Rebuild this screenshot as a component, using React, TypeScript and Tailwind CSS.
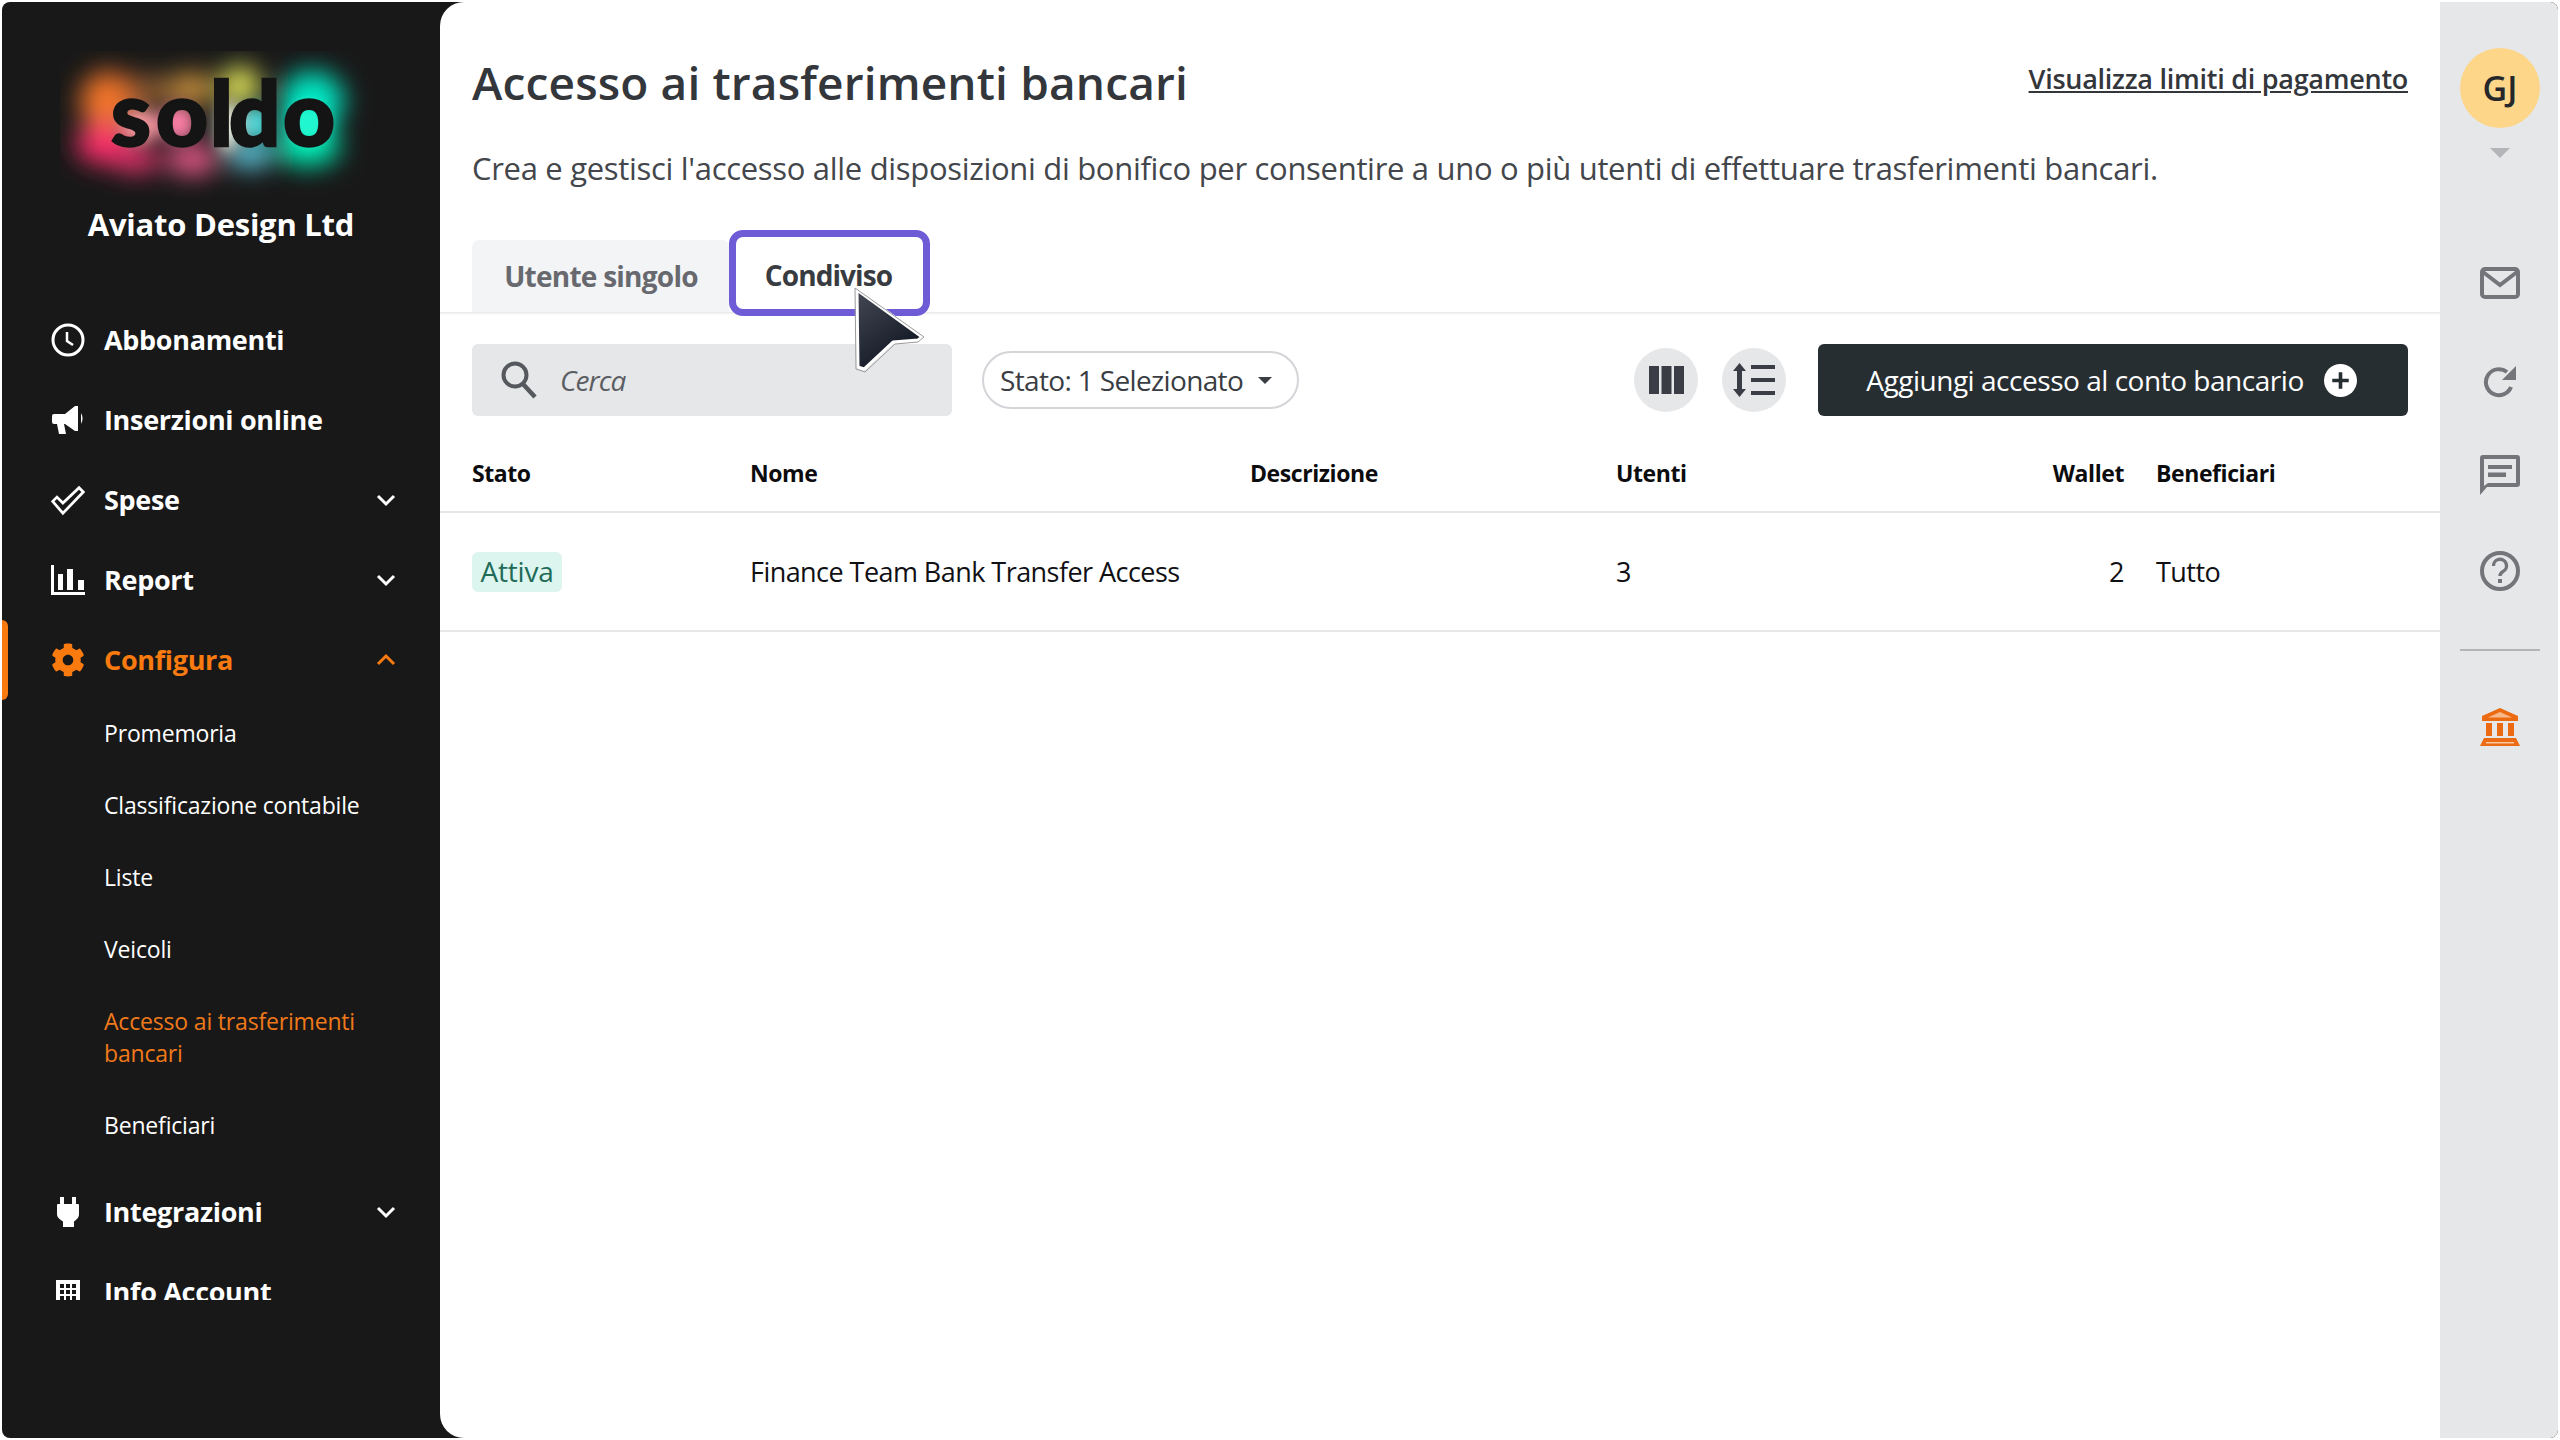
import React from "react";
import { FaCog } from "react-icons/fa";

const Chevron = ({ up = false }: { up?: boolean }) => (
  <svg width="20" height="14" viewBox="0 0 20 14" fill="none" stroke="currentColor" strokeWidth="3" className="shrink-0">
    {up ? <path d="M2 11l8-8 8 8" /> : <path d="M2 3l8 8 8-8" />}
  </svg>
);

const Clock = () => (
  <svg width="34" height="34" viewBox="0 0 34 34" fill="none" stroke="currentColor" strokeWidth="3">
    <circle cx="17" cy="17" r="15" />
    <path d="M16 9v9l6 4" strokeWidth="2.5" />
  </svg>
);
const Horn = () => (
  <svg width="32" height="28" viewBox="0 0 32 28" fill="currentColor">
    <path d="M2 8h11L23 0h3v25h-3L13 18h-1l2 10H7L5 18H2a2 2 0 0 1-2-2v-6a2 2 0 0 1 2-2z" />
    <path d="M29 7q3 5.500 0 11z" />
  </svg>
);
const Check = () => (
  <svg width="42" height="35" viewBox="0 0 40 34" fill="none" stroke="currentColor" strokeWidth="3.2" strokeLinejoin="miter">
    <path d="M2 18l5-5 7 7L33 2l5 5-24 25z" />
  </svg>
);
const Bars = () => (
  <svg width="34" height="30" viewBox="0 0 34 30" fill="currentColor">
    <path d="M0 0h3v27h31v3H0zM7 9h5v16H7zM16 4h6v21h-6zM27 15h6v10h-6z" />
  </svg>
);
const Plug = () => (
  <svg width="22" height="30" viewBox="0 0 22 30" fill="currentColor">
    <path d="M3 0h4v7h8V0h4v7h2a1 1 0 0 1 1 1v9c0 4-3 6-5 7.500V30H6v-5.500C4 23 0 21 0 17V8a1 1 0 0 1 1-1h2z" />
  </svg>
);
const Building = () => (
  <svg width="24" height="24" viewBox="0 0 24 24" fill="currentColor" fillRule="evenodd">
    <path d="M0 0h24v24H0zM4 4v4h4V4zm6 0v4h4V4zm6 0v4h4V4zM4 10v4h4v-4zm6 0v4h4v-4zm6 0v4h4v-4zM4 16v4h4v-4zm6 0v4h4v-4zm6 0v4h4v-4z" />
  </svg>
);

const NavItem = ({ icon, label, chevron, active, up }: { icon: React.ReactNode; label: string; chevron?: boolean; active?: boolean; up?: boolean }) => (
  <div className={`relative flex h-[80px] items-center pl-[49px] pr-[44px] ${active ? "text-[#f97b10]" : "text-white"}`}>
    {active && <div className="absolute left-0 top-0 h-[80px] w-[6px] rounded-r-md bg-[#f97b10]" />}
    <div className="flex w-[34px] shrink-0 justify-center">{icon}</div>
    <span className="ml-[19px] flex-1 text-[27px] font-bold tracking-[-0.32px]">{label}</span>
    {chevron && <Chevron up={up} />}
  </div>
);

const SubItem = ({ children, active }: { children: React.ReactNode; active?: boolean }) => (
  <div className={`py-[20px] pl-[102px] pr-[60px] text-[23px] leading-[32px] tracking-[-0.18px] ${active ? "text-[#f0791a]" : "text-white"}`}>{children}</div>
);

const Logo = () => (
  <svg width="320" height="150" viewBox="60 50 320 150" className="block">
    <defs>
      <filter id="b1" x="-50%" y="-50%" width="200%" height="200%"><feGaussianBlur stdDeviation="13" /></filter>
      <filter id="b2" x="-50%" y="-50%" width="200%" height="200%"><feGaussianBlur stdDeviation="8" /></filter>
    </defs>
    <g filter="url(#b1)">
      <ellipse cx="108" cy="100" rx="28" ry="30" fill="#f4762a" />
      <ellipse cx="104" cy="143" rx="28" ry="20" fill="#ff2f6c" />
      <ellipse cx="136" cy="158" rx="24" ry="14" fill="#e83470" />
      <ellipse cx="150" cy="90" rx="24" ry="16" fill="#8a5a30" />
      <ellipse cx="192" cy="88" rx="22" ry="16" fill="#d89a40" />
      <ellipse cx="192" cy="158" rx="26" ry="16" fill="#ee5c8c" />
      <ellipse cx="240" cy="85" rx="20" ry="20" fill="#e8ec5c" />
      <ellipse cx="250" cy="152" rx="22" ry="15" fill="#64d8f0" />
      <ellipse cx="312" cy="100" rx="32" ry="30" fill="#00e8c4" />
      <ellipse cx="308" cy="145" rx="32" ry="20" fill="#00f0b8" />
    </g>
    <g filter="url(#b2)">
      <ellipse cx="178" cy="122" rx="18" ry="18" fill="#ff80a8" />
      <ellipse cx="140" cy="125" rx="20" ry="18" fill="#f89aa0" />
      <ellipse cx="228" cy="125" rx="11" ry="26" fill="#ffffee" />
      <ellipse cx="256" cy="122" rx="16" ry="18" fill="#50d8d8" />
      <ellipse cx="308" cy="122" rx="20" ry="20" fill="#20f8d0" />
    </g>
    <text x="111 156 210 229 283" y="145" fontFamily="Lato, sans-serif" fontWeight="900" fontSize="90" fill="#141414" stroke="#141414" strokeWidth="2.5">soldo</text>
  </svg>
);

const Th = ({ children, right }: { children: React.ReactNode; right?: boolean }) => (
  <div className={`text-[23px] font-bold tracking-[-0.42px] text-[#0c0c0f] ${right ? "text-right" : ""}`}>{children}</div>
);

export default function App() {
  return (
    <div className="h-screen w-screen overflow-hidden bg-white p-[2px] font-['Open_Sans',sans-serif]">
      <div className="flex h-full w-full overflow-hidden rounded-lg bg-[#181818]">
        {/* Sidebar */}
        <aside className="flex h-[1298px] w-[438px] shrink-0 flex-col overflow-hidden">
          <div className="ml-[58px] mt-[49px]"><Logo /></div>
          <div className="mt-[2px] text-center text-[31px] font-bold leading-[42px] tracking-[-0.25px] text-white">Aviato Design Ltd</div>
          <nav className="mt-[55px] flex flex-col">
            <NavItem icon={<Clock />} label="Abbonamenti" />
            <NavItem icon={<Horn />} label="Inserzioni online" />
            <NavItem icon={<Check />} label="Spese" chevron />
            <NavItem icon={<Bars />} label="Report" chevron />
            <NavItem icon={<FaCog size={34} />} label="Configura" chevron up active />
            <div className="-mt-[3px] flex flex-col">
              <SubItem>Promemoria</SubItem>
              <SubItem>Classificazione contabile</SubItem>
              <SubItem>Liste</SubItem>
              <SubItem>Veicoli</SubItem>
              <SubItem active>Accesso ai trasferimenti bancari</SubItem>
              <SubItem>Beneficiari</SubItem>
            </div>
            <div className="mt-[11px]">
              <NavItem icon={<Plug />} label="Integrazioni" chevron />
              <NavItem icon={<Building />} label="Info Account" />
            </div>
          </nav>
        </aside>

        {/* Main */}
        <main className="relative flex min-w-0 flex-1 flex-col rounded-l-[24px] bg-white">
          <div className="flex items-center justify-between pl-[32px] pr-[32px] pt-[50px]">
            <h1 className="text-[46px] font-semibold leading-[60px] tracking-[0.15px] text-[#33363b]">Accesso ai trasferimenti bancari</h1>
            <a className="mb-[5px] text-[27px] font-semibold tracking-[-0.27px] text-[#33363b] underline">Visualizza limiti di pagamento</a>
          </div>
          <p className="pl-[32px] pt-[34px] text-[31px] leading-[44px] tracking-[-0.31px] text-[#43464b]">Crea e gestisci l'accesso alle disposizioni di bonifico per consentire a uno o più utenti di effettuare trasferimenti bancari.</p>

          <div className="mt-[40px] flex h-[82px] items-start pl-[32px]">
            <div className="mt-[10px] flex h-[72px] w-[258px] items-center justify-center rounded-t-lg bg-[#f3f4f6] text-[28px] font-bold tracking-[-0.75px] text-[#67696e]">Utente singolo</div>
            <div className="relative z-10 -ml-[1px] flex h-[86px] w-[201px] shrink-0 items-center justify-center rounded-[14px] border-[7px] border-[#6e5cd6] bg-white pr-[2px] pt-[4px] text-[28px] font-bold tracking-[-0.9px] text-[#383b40]">Condiviso</div>
          </div>
          <div className="h-[3px] bg-gradient-to-b from-[#e8e8e8] to-white" />

          <div className="flex items-center pl-[32px] pr-[32px] pt-[29px]">
            <div className="flex h-[72px] w-[480px] items-center rounded-md bg-[#e6e7e9] pl-[29px] text-[#55585d]">
              <svg width="36" height="38" viewBox="0 0 36 38" fill="none" stroke="currentColor">
                <circle cx="14" cy="14" r="11.5" strokeWidth="4" />
                <path d="M22 23l12 13" strokeWidth="4.5" />
              </svg>
              <span className="ml-[23px] text-[28px] italic tracking-[-0.9px] text-[#5a5d62]">Cerca</span>
            </div>
            <div className="ml-[30px] flex h-[58px] w-[317px] items-center justify-between rounded-full border-2 border-[#d4d5d8] pl-[16px] pr-[25px] text-[28px] tracking-[-0.65px] text-[#3a3d42]">
              <span>Stato: 1 Selezionato</span>
              <svg width="14" height="7" viewBox="0 0 16 8" fill="currentColor"><path d="M0 0h16L8 8z" /></svg>
            </div>
            <div className="ml-auto flex h-[64px] w-[64px] items-center justify-center rounded-full bg-[#e6e7e9] text-[#3a3d45]">
              <svg width="35" height="28" viewBox="0 0 35 28" fill="currentColor"><path d="M0 0h10v28H0zM12.500 0h10v28h-10zM25 0h10v28H25z" /></svg>
            </div>
            <div className="ml-[24px] flex h-[64px] w-[64px] items-center justify-center rounded-full bg-[#e6e7e9] text-[#3a3d45]">
              <svg width="42" height="34" viewBox="0 0 42 34" fill="currentColor"><path d="M6.500 0L13 8H9v18h4l-6.500 8L0 26h4V8H0zM18 2h24v4H18zM18 15h24v4H18zM18 28h24v4H18z" /></svg>
            </div>
            <button className="ml-[32px] flex h-[72px] w-[590px] items-center justify-center rounded-md bg-[#272e32] pr-[3px] text-[28px] tracking-[-0.47px] text-white">
              <span>Aggiungi accesso al conto bancario</span>
              <svg width="33" height="33" viewBox="0 0 32 32" className="ml-[20px]"><circle cx="16" cy="16" r="16" fill="#fff" /><path d="M16 8v16M8 16h16" stroke="#272e32" strokeWidth="3.500" /></svg>
            </button>
          </div>

          <div className="mt-[19px] grid h-[78px] grid-cols-[32px_278px_500px_366px_508px_1fr] items-center border-b-2 border-[#e6e7e9]">
            <div />
            <Th>Stato</Th>
            <Th>Nome</Th>
            <Th>Descrizione</Th>
            <div className="grid grid-cols-2"><Th>Utenti</Th><Th right>Wallet</Th></div>
            <div className="pl-[32px]"><Th>Beneficiari</Th></div>
          </div>
          <div className="grid h-[119px] grid-cols-[32px_278px_500px_366px_508px_1fr] items-center border-b-2 border-[#e6e7e9] pt-[1px] text-[27px] tracking-[-0.55px] text-[#101014]">
            <div />
            <div><span className="inline-block h-[40px] w-[90px] rounded-md bg-[#dcf5ee] text-center text-[28px] leading-[38px] tracking-[-0.2px] text-[#1f6b58]">Attiva</span></div>
            <div>Finance Team Bank Transfer Access</div>
            <div />
            <div className="flex justify-between"><span>3</span><span>2</span></div>
            <div className="pl-[32px]">Tutto</div>
          </div>

          <svg width="74" height="88" viewBox="0 0 74 88" className="absolute left-[413px] top-[283px] z-20">
            <defs>
              <linearGradient id="cur" x1="0" y1="0" x2="0.6" y2="1"><stop offset="0" stopColor="#444955" /><stop offset="1" stopColor="#0e1420" /></linearGradient>
            </defs>
            <path d="M4 5L69 52l-4 3-25 2L11 84l-6-2z" fill="url(#cur)" stroke="#fff" strokeWidth="3" strokeLinejoin="round" />
            <path d="M2 3L71 52l-6 5-23 2L12 87l-9-3z" fill="none" stroke="#9a9a9a" strokeWidth="1" strokeLinejoin="round" />
          </svg>
        </main>

        {/* Right rail */}
        <aside className="flex w-[118px] shrink-0 flex-col items-center bg-[#e6e7e9] pl-[2px] text-[#74757a]">
          <div className="mt-[46px] flex h-[80px] w-[80px] items-center justify-center rounded-full bg-[#fdd68a] text-[34px] font-semibold text-[#25272a]">GJ</div>
          <svg width="20" height="10" viewBox="0 0 20 10" className="mt-[20px]" fill="#b4b5b9"><path d="M0 0h20L10 10z" /></svg>
          <svg width="40" height="32" viewBox="0 0 40 32" fill="none" stroke="currentColor" strokeWidth="4" className="mt-[109px]">
            <rect x="2" y="2" width="36" height="28" rx="3" />
            <path d="M3 5l17 13L37 5" />
          </svg>
          <svg width="34" height="34" viewBox="0 0 34 34" fill="none" className="mt-[67px]">
            <path d="M28 21A13 13 0 1 1 24 6" stroke="currentColor" strokeWidth="4" />
            <path d="M33 0v14H19z" fill="currentColor" />
          </svg>
          <svg width="40" height="40" viewBox="0 0 40 40" className="mt-[55px]" fill="currentColor" fillRule="evenodd">
            <path d="M3 0h34a3 3 0 0 1 3 3v26a3 3 0 0 1-3 3H7L0 40V3a3 3 0 0 1 3-3zM4 4v27l4-3h28V4zM8 10h24v4H8zM8 17.500h18v4.500H8z" />
          </svg>
          <svg width="40" height="40" viewBox="0 0 40 40" className="mt-[56px]" fill="none" stroke="currentColor">
            <circle cx="20" cy="20" r="18" strokeWidth="4" />
            <path d="M13.500 15a6.500 6.500 0 1 1 9.500 5.500c-2 1.200-3 2-3 4.500" strokeWidth="3.400" />
            <rect x="18" y="28" width="4" height="4" fill="currentColor" stroke="none" />
          </svg>
          <div className="mt-[58px] h-[2px] w-[80px] bg-[#b4b5b9]" />
          <svg width="40" height="38" viewBox="0 0 40 38" className="mt-[57px]" fill="#ec6a12">
            <path d="M20 0L38 8v5H2V8zM6 15h6v13H6zM17 15h6v13h-6zM28 15h6v13h-6zM4 30h32l4 8H0z" />
            <path d="M6 34h28v1.500H6z" fill="#f7c9a0" />
            <path d="M8 9.500h24L20 4z" fill="#f7b98a" />
          </svg>
        </aside>
      </div>
    </div>
  );
}
